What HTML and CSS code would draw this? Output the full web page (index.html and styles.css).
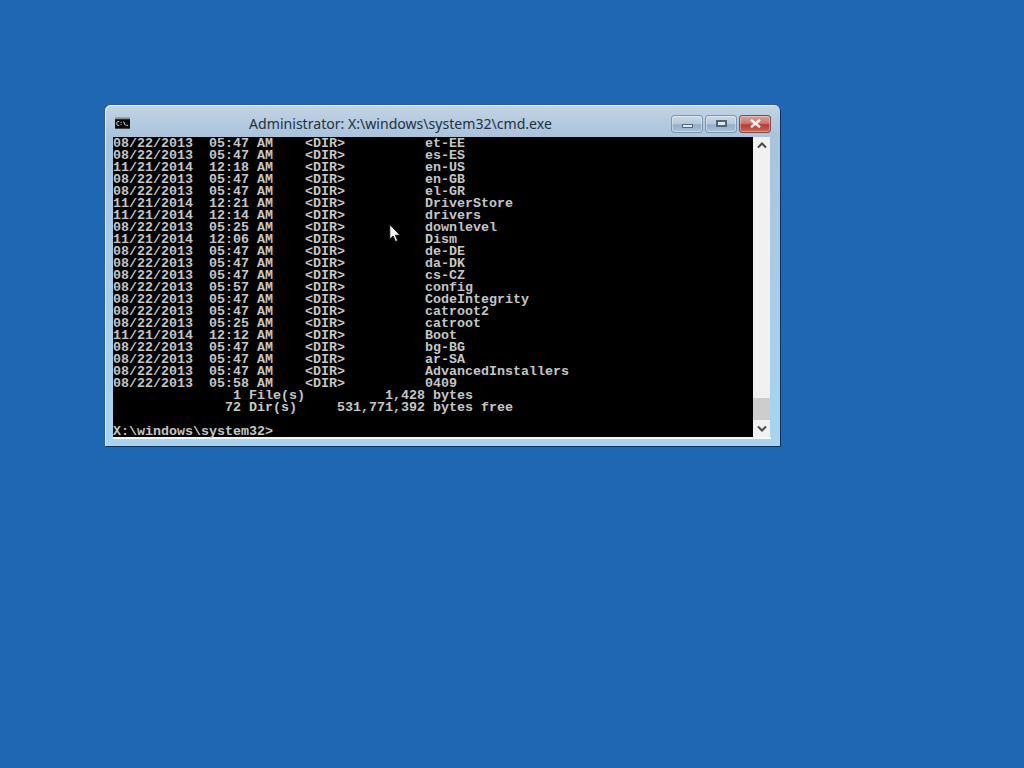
FILE: index.html
```html
<!DOCTYPE html>
<html lang="en">
<head>
<meta charset="utf-8">
<title>Administrator: X:\windows\system32\cmd.exe</title>
<link rel="stylesheet" href="styles.css">
</head>
<body>
<main class="desktop">
  <section class="window">
    <header class="titlebar">
      <svg class="app-icon" width="15" height="12" viewBox="0 0 16 12">
        <rect width="16" height="12" fill="#8a8f96"/>
        <rect y="2" width="16" height="10" fill="#0a0a0a"/>
        <path d="M2.500 4.500h2M2 5v3M2.500 8.500h2M6 5.500h1M6 7.500h1M9 4.500l2 4M12 8.500h2" stroke="#e4e4e4" fill="none"/>
      </svg>
      <h1 class="title">Administrator: X:\windows\system32\cmd.exe</h1>
      <div class="controls">
        <div class="btn"><span class="glyph-min"></span></div>
        <div class="btn"><span class="glyph-max"></span></div>
        <div class="btn btn-close">
          <svg width="11" height="9" viewBox="0 0 11 9"><path d="M1 .800l9 7.400M10 .800l-9 7.400" stroke="#f6f3f2" stroke-width="2.400" fill="none"/></svg>
        </div>
      </div>
    </header>
    <div class="client">
<pre class="console">08/22/2013  05:47 AM    &lt;DIR&gt;          et-EE
08/22/2013  05:47 AM    &lt;DIR&gt;          es-ES
11/21/2014  12:18 AM    &lt;DIR&gt;          en-US
08/22/2013  05:47 AM    &lt;DIR&gt;          en-GB
08/22/2013  05:47 AM    &lt;DIR&gt;          el-GR
11/21/2014  12:21 AM    &lt;DIR&gt;          DriverStore
11/21/2014  12:14 AM    &lt;DIR&gt;          drivers
08/22/2013  05:25 AM    &lt;DIR&gt;          downlevel
11/21/2014  12:06 AM    &lt;DIR&gt;          Dism
08/22/2013  05:47 AM    &lt;DIR&gt;          de-DE
08/22/2013  05:47 AM    &lt;DIR&gt;          da-DK
08/22/2013  05:47 AM    &lt;DIR&gt;          cs-CZ
08/22/2013  05:57 AM    &lt;DIR&gt;          config
08/22/2013  05:47 AM    &lt;DIR&gt;          CodeIntegrity
08/22/2013  05:47 AM    &lt;DIR&gt;          catroot2
08/22/2013  05:25 AM    &lt;DIR&gt;          catroot
11/21/2014  12:12 AM    &lt;DIR&gt;          Boot
08/22/2013  05:47 AM    &lt;DIR&gt;          bg-BG
08/22/2013  05:47 AM    &lt;DIR&gt;          ar-SA
08/22/2013  05:47 AM    &lt;DIR&gt;          AdvancedInstallers
08/22/2013  05:58 AM    &lt;DIR&gt;          0409
               1 File(s)          1,428 bytes
              72 Dir(s)     531,771,392 bytes free

X:\windows\system32&gt;</pre>
      <div class="scrollbar">
        <div class="arrow">
          <svg width="10" height="7" viewBox="0 0 10 7"><path d="M1 5.500l4-4 4 4" stroke="#4a4a4a" stroke-width="2" fill="none"/></svg>
        </div>
        <div class="track"><div class="thumb"></div></div>
        <div class="arrow">
          <svg width="10" height="7" viewBox="0 0 10 7"><path d="M1 1.500l4 4 4-4" stroke="#4a4a4a" stroke-width="2" fill="none"/></svg>
        </div>
      </div>
    </div>
  </section>
  <svg class="cursor" width="12" height="19" viewBox="0 0 12 20">
    <path d="M.5.500v15.500l3.500-3.300 2.500 5.800 2.400-1-2.500-5.600h5z" fill="#f4f4f4" stroke="#111" stroke-width="1"/>
  </svg>
</main>
</body>
</html>
```
FILE: styles.css
```css
html, body {
  margin: 0;
  height: 100%;
}
.desktop {
  position: relative;
  box-sizing: border-box;
  width: 1024px;
  height: 768px;
  padding: 105px 0 0 105px;
  background: #1f66b3;
  overflow: hidden;
}
.window {
  box-sizing: border-box;
  width: 675px;
  height: 341px;
  display: flex;
  flex-direction: column;
  padding: 0 9px 7px 8px;
  background: linear-gradient(180deg, #c4d4e4 0, #a9c3dc 32px, #a9cde9 200px, #a8d4f0 100%);
  border-radius: 6px 6px 0 0;
  box-shadow: inset 1px 1px 0 0 #e3edf6, 1px 1px 0 0 #0f2f5c, 0 0 0 1px #2e5f96;
}
.titlebar {
  flex: none;
  height: 32px;
  display: flex;
  align-items: center;
  position: relative;
}
.app-icon {
  flex: none;
  margin-top: 4px;
  margin-left: 2px;
}
.title {
  margin: 5px 0 0;
  position: absolute;
  left: 0;
  right: 83px;
  text-align: center;
  font: 400 14.080px/20px "Noto Sans", "Open Sans", sans-serif;
  color: #23303f;
}
.controls {
  margin-left: auto;
  display: flex;
  gap: 2px;
  margin-top: 5px;
  height: 18px;
}
.btn {
  box-sizing: border-box;
  width: 32px;
  height: 18px;
  display: flex;
  align-items: center;
  justify-content: center;
  border: 1px solid #7d96ae;
  border-radius: 3px;
  background: linear-gradient(180deg, #c9d9e8 0, #b3c8dc 50%, #93aec7 55%, #a9c2d8 100%);
  box-shadow: inset 0 0 0 1px rgba(255,255,255,.35);
}
.btn-close {
  border-color: #7c4a48;
  background: linear-gradient(180deg, #d8a097 0, #cc7a6d 45%, #b83a30 55%, #c8675a 100%);
}
.glyph-min {
  display: block;
  width: 11px;
  height: 4px;
  margin-top: 5px;
  box-sizing: border-box;
  background: #dfe8f0;
  border: 1px solid #51677c;
}
.glyph-max {
  display: block;
  width: 11px;
  height: 7px;
  box-sizing: border-box;
  background: #dfe8f0;
  border: 2px solid #4f6479;
}
.client {
  flex: 1;
  display: flex;
  min-height: 0;
  border-bottom: 2px solid #f4f8fb;
}
.console {
  box-sizing: border-box;
  width: 640px;
  height: 300px;
  margin: 0;
  padding-top: 1px;
  flex: none;
  background: #000;
  color: #c6c6c6;
  font: 700 13.330px/12px "Liberation Mono", monospace;
  white-space: pre;
}
.scrollbar {
  width: 17px;
  height: 300px;
  display: flex;
  flex-direction: column;
  background: #f1f1f1;
}
.arrow {
  flex: none;
  height: 17px;
  display: flex;
  align-items: center;
  justify-content: center;
}
.track {
  flex: 1;
  display: flex;
  flex-direction: column;
  justify-content: flex-end;
}
.thumb {
  height: 22px;
  background: #cdcdcd;
}
.cursor {
  position: absolute;
  left: 389px;
  top: 224px;
}
```
